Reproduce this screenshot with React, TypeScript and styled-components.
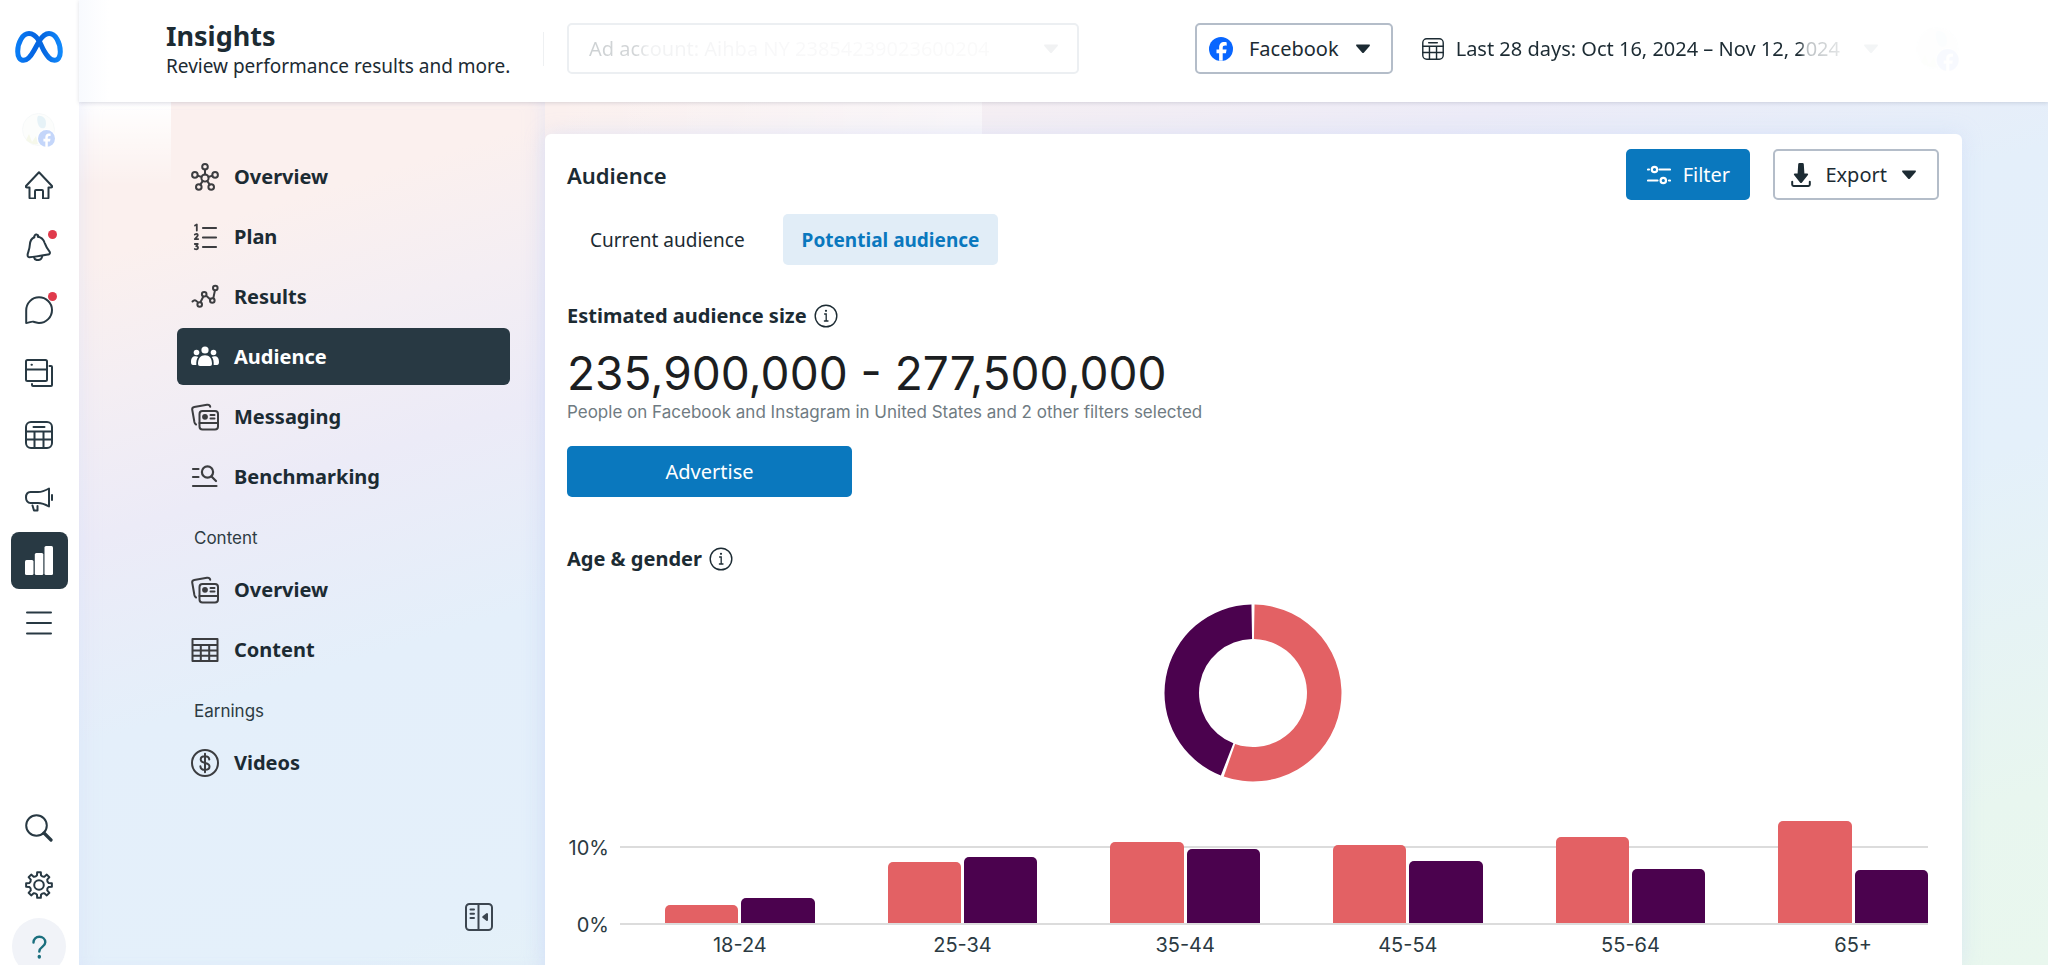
import React from 'react';
import styled, { createGlobalStyle, css } from 'styled-components';

const INK = '#1c2b33';
const SLATE = '#283943';
const BLUE = '#0a78be';
const CORAL = '#e36164';
const PLUM = '#4b024e';

const UI = '"Noto Sans", "Open Sans", sans-serif';
const PLAIN = 'Inter, Roboto, sans-serif';

const GlobalStyle = createGlobalStyle`
  *, *::before, *::after { box-sizing: border-box; }
  html, body { margin: 0; }
  body { font-family: ${UI}; font-size: 20px; line-height: 28px; color: ${INK}; background: #fff; }
  button, select { font: inherit; color: inherit; margin: 0; }
  h1, h2, h3, p, ul { margin: 0; padding: 0; }
  ul { list-style: none; }
  a { color: inherit; text-decoration: none; }
`;

const Page = styled.div`
  display: flex;
  height: 100vh;
  overflow: hidden;
`;

/* ---------- icon rail ---------- */

const Rail = styled.aside`
  flex: 0 0 79px;
  display: flex;
  flex-direction: column;
  align-items: center;
  padding: 31px 1px 0 0;
  background: #fff;
`;

const RailList = styled.nav`
  display: flex;
  flex-direction: column;
  justify-content: space-between;
  height: 496px;
  margin-top: 9px;
`;

const RailFoot = styled.div`
  display: flex;
  flex-direction: column;
  align-items: center;
  margin: auto 0 -10px;
`;

const RailButton = styled.button<{ $active?: boolean }>`
  position: relative;
  display: grid;
  place-items: center;
  width: 57px;
  height: 57px;
  padding: 0;
  border: 0;
  border-radius: 8px;
  color: ${({ $active }) => ($active ? '#fff' : SLATE)};
  background: ${({ $active }) => ($active ? SLATE : 'transparent')};
`;

const HelpButton = styled(RailButton)`
  width: 54px;
  margin-top: 5px;
  border-radius: 50%;
  background: #f1f3f8;
  color: #1b6f7e;
`;

const Dot = styled.span`
  position: absolute;
  top: 11px;
  right: 11px;
  width: 9px;
  height: 9px;
  border-radius: 50%;
  background: #e03a4c;
`;

const PageAvatar = styled.div`
  margin-top: 50px;
  height: 34px;
  opacity: 0.28;
`;

/* ---------- header ---------- */

const Column = styled.div`
  flex: 1;
  min-width: 0;
  display: flex;
  flex-direction: column;
`;

const Header = styled.header`
  position: relative;
  display: flex;
  align-items: center;
  height: 102px;
  padding: 0 88px 5px 87px;
  background: linear-gradient(90deg, #f8fafe 0, #fff 30px);
  box-shadow: 0 1px 4px rgba(40, 50, 80, 0.16);
`;

const Heading = styled.div`
  width: 377px;
  padding-top: 2px;
`;

const Title = styled.h1`
  font-size: 27px;
  line-height: 32px;
  font-weight: 700;
`;

const Subtitle = styled.p`
  font-size: 19px;
  line-height: 28px;
  white-space: nowrap;
`;

const Divider = styled.span`
  width: 1px;
  height: 34px;
  background: #eef0f2;
`;

const Outlined = styled.button`
  display: flex;
  align-items: center;
  height: 51px;
  padding: 0 20px 0 14px;
  border: 2px solid #b4bdc9;
  border-radius: 5px;
  background: #fff;
  white-space: nowrap;
`;

const AccountButton = styled(Outlined)`
  flex: 0 1 512px;
  justify-content: space-between;
  margin-left: 23px;
  padding: 0 18px 0 20px;
  border-color: #eceff2;
  color: #f1f2f3;
`;

const FadedName = styled.span`
  color: transparent;
  background: linear-gradient(90deg, #cdd1d3 0, #d3d6d8 48px, #f1f2f3 60px, #f8f8f9 160px, #fafafa 100%);
  background-clip: text;
`;

const SourceButton = styled(Outlined)`
  gap: 16px;
  margin-left: auto;
  padding-left: 12px;
`;

const DateButton = styled.button`
  display: flex;
  align-items: center;
  gap: 12px;
  margin-left: 29px;
  padding: 0;
  border: 0;
  background: none;
  white-space: nowrap;

  > svg:last-child { color: #f3f5f6; margin-left: 11px; }
`;

const DateText = styled.span`
  color: transparent;
  background: linear-gradient(90deg, ${INK} 0, ${INK} calc(100% - 40px), #b9bec1 calc(100% - 34px), #e3e5e6 100%);
  background-clip: text;
`;

const ProfileGhost = styled.div`
  margin-left: 37px;
  height: 44px;
  opacity: 0.03;
`;

/* ---------- body ---------- */

const Body = styled.div`
  flex: 1;
  min-height: 0;
  display: flex;
  padding-right: 86px;
  background:
    linear-gradient(rgba(255, 255, 255, 0.9) 10%, rgba(255, 255, 255, 0)) 0 0 / 92px 84px no-repeat,
    linear-gradient(90deg, rgba(255, 255, 255, 0), rgba(255, 255, 255, 0.5)) 461px 0 / 442px 32px no-repeat,
    linear-gradient(163deg, #fbf0ee 0, #fbf0ee 11%, #f4eef3 20%, #ecebf7 30%, #e4effa 44%, #e4f0fa 64%, #e8f6ef 88%, #e9f7ee 100%);
`;

const SideNav = styled.nav`
  flex: 0 0 466px;
  display: flex;
  flex-direction: column;
  padding: 46px 35px 34px 98px;
  box-shadow: inset 16px 0 20px -14px rgba(205, 215, 250, 0.35), inset -16px 0 20px -14px rgba(205, 215, 250, 0.35);
`;

const NavList = styled.ul`
  display: flex;
  flex-direction: column;
  gap: 3px;
`;

const NavLink = styled.a<{ $active?: boolean }>`
  display: flex;
  align-items: center;
  gap: 15px;
  height: 57px;
  padding: 0 14px;
  border-radius: 6px;
  font-size: 20px;
  font-weight: 700;
  color: ${({ $active }) => ($active ? '#fff' : INK)};
  ${({ $active }) => $active && css`background: ${SLATE};`}

  svg { color: ${({ $active }) => ($active ? '#fff' : '#3c3d40')}; }
`;

const NavLabel = styled.h2`
  margin: 20px 0 9px 17px;
  font: 400 17px/27px ${PLAIN};
  color: #2d3b43;
`;

const CollapseButton = styled.button`
  align-self: flex-end;
  display: flex;
  margin: auto 17px 0 0;
  padding: 0;
  border: 0;
  background: none;
  color: #3c4650;
`;

const Card = styled.main`
  flex: 1;
  min-width: 0;
  margin-top: 32px;
  padding: 15px 23px 0 22px;
  background: #fff;
  border-radius: 6px 6px 0 0;
  box-shadow: 0 0 20px rgba(190, 205, 250, 0.35);
`;

const CardHead = styled.div`
  display: flex;
  align-items: center;
  gap: 23px;
`;

const CardTitle = styled.h2`
  margin-right: auto;
  font-size: 22px;
  line-height: 28px;
  font-weight: 600;
`;

const PrimaryButton = styled.button<{ $wide?: boolean }>`
  display: flex;
  align-items: center;
  justify-content: center;
  gap: 12px;
  width: ${({ $wide }) => ($wide ? '285px' : '124px')};
  height: 51px;
  padding: 0;
  border: 0;
  border-radius: 5px;
  background: ${BLUE};
  color: #fff;
`;

const ExportButton = styled(Outlined)`
  gap: 14px;
  padding-left: 16px;
`;

const Tabs = styled.div`
  display: flex;
  gap: 19px;
  margin-top: 14px;
  padding-left: 4px;
`;

const Tab = styled.button<{ $active?: boolean }>`
  height: 51px;
  padding: 0 19px;
  border: 0;
  border-radius: 5px;
  font-size: 19px;
  font-weight: ${({ $active }) => ($active ? 700 : 400)};
  color: ${({ $active }) => ($active ? BLUE : INK)};
  background: ${({ $active }) => ($active ? '#e1edf7' : 'transparent')};
`;

const SectionTitle = styled.h3`
  display: flex;
  align-items: center;
  gap: 7px;
  font-size: 20px;
  line-height: 28px;
  font-weight: 700;
`;

const Estimate = styled.section`
  padding-top: 37px;
`;

const Range = styled.p`
  margin-top: 15px;
  font: 400 46px/56px ${PLAIN};
  color: #1c1e21;
  white-space: nowrap;
`;

const Note = styled.p`
  margin: 0 0 22px;
  font: 400 17px/23px ${PLAIN};
  color: #6f7b82;
`;

const Demographics = styled.section`
  padding-top: 48px;
`;

const Donut = styled.svg`
  display: block;
  width: 178px;
  height: 178px;
  margin: 31px auto 0;
`;

/* ---------- bar chart ---------- */

const Chart = styled.div`
  display: grid;
  grid-template-columns: 42px 1fr;
  column-gap: 11px;
  margin: 39px 11px 0 0;
  font: 400 20px/24px ${PLAIN};
  color: #2b3a42;
`;

const Axis = styled.div`
  display: flex;
  flex-direction: column;
  justify-content: space-between;
  align-items: flex-end;
  height: 101px;
  margin: 15px 0 -12px;
`;

const Plot = styled.div`
  height: 104px;
  border-bottom: 2px solid #dcdcdc;
  background: linear-gradient(#dcdcdc, #dcdcdc) 0 25px / 100% 2px no-repeat;
`;

const Groups = styled.div`
  display: grid;
  grid-template-columns: repeat(6, 1fr);
  column-gap: 73px;
  height: 100%;
  padding-left: 45px;
`;

const Group = styled.div`
  display: flex;
  align-items: flex-end;
  gap: 3px;
`;

const Bar = styled.div<{ $tone: string; $share: number }>`
  flex: 1;
  height: ${({ $share }) => $share}%;
  border-radius: 5px 5px 0 0;
  background: ${({ $tone }) => $tone};
`;

const AgeLabels = styled(Groups)`
  grid-column: 2;
  height: auto;
  padding-top: 8px;
  text-align: center;
`;

/* ---------- icons ---------- */

type IconProps = { size?: number; box?: number; sw?: number; children: React.ReactNode };

const Icon = ({ size = 28, box = 28, sw = 2, children }: IconProps) => (
  <svg width={size} height={size} viewBox={`0 0 ${box} ${box}`} fill="none" stroke="currentColor"
    strokeWidth={sw} strokeLinecap="round" strokeLinejoin="round" aria-hidden="true">{children}</svg>
);

const Caret = () => (
  <svg width="16" height="10" viewBox="0 0 16 10" fill="currentColor" aria-hidden="true">
    <path d="M2 0.5h12q1.6 0 .7 1.4L9 8.6q-1 1-2 0L1.3 1.9Q.4.5 2 .5z" />
  </svg>
);

const MetaLogo = () => (
  <svg width="48" height="32" viewBox="0 0 48 32" fill="none" aria-label="Meta">
    <defs>
      <linearGradient id="metaA" x1="0" y1="0" x2="1" y2="0">
        <stop offset="0" stopColor="#0a7cf5" />
        <stop offset="0.35" stopColor="#0566e4" />
        <stop offset="0.6" stopColor="#0668e1" />
        <stop offset="1" stopColor="#1088fb" />
      </linearGradient>
    </defs>
    <path d="M24 9.5C20.500 4.500 17.500 2.600 14 2.600 7.500 2.600 2.700 11.500 2.700 20.500c0 5.500 2.300 8.800 6 8.800 4 0 6.700-3.300 10.300-9.800L24 10.500C27.500 4.800 30.500 2.600 34 2.600c6.500 0 11.300 8.900 11.300 18.200 0 5.400-2.300 8.500-5.900 8.500-4 0-6.600-2.900-10.900-10.300z"
      stroke="url(#metaA)" strokeWidth="5" strokeLinejoin="round" />
  </svg>
);

const FacebookMark = ({ size = 24 }: { size?: number }) => (
  <svg width={size} height={size} viewBox="0 0 24 24" aria-hidden="true">
    <circle cx="12" cy="12" r="12" fill="#0866ff" />
    <path d="M10.100 23.800v-7.600H7.500v-3.700h2.600v-1.700c0-3.900 1.800-5.700 5.300-5.700.9 0 1.800.1 2.300.3v3.300c-.4 0-1-.1-1.500-.1-1.800 0-2.500.7-2.500 2.400v1.500h3.900l-.7 3.700h-3.200v7.600z" fill="#fff" />
  </svg>
);

const GhostAvatar = ({ size = 34 }: { size?: number }) => (
  <svg width={size} height={size} viewBox="0 0 34 34" aria-hidden="true">
    <circle cx="16.500" cy="16.500" r="16" fill="#f7faf6" stroke="#dfe8ea" />
    <path d="M16 3c4-1 8 2 8 7s-2 6-5 5-5-9-3-12z" fill="#a9d3e6" />
    <path d="M4 27l3-6 3 8 4-6 2 8q-7 1-12-4z" fill="#dfe9b8" />
    <g transform="translate(16 17)">
      <circle cx="8.500" cy="8.500" r="9.500" fill="#fff" />
      <circle cx="8.500" cy="8.500" r="8.500" fill="#2f6ff0" />
      <path d="M7.300 17v-5.600H5.400V8.800h1.900V7.600c0-2.800 1.300-4 3.700-4h1.600v2.300h-1c-1.300 0-1.800.5-1.800 1.700v1.200h2.700l-.5 2.600H9.800V17z" fill="#fff" />
    </g>
  </svg>
);

const HomeIcon = () => (
  <Icon><path d="M1 15 14 1.200 27 15q.4 1.500-1 1.500h-2.500V26.500q0 1-1 1H18V20q0-1-1-1h-6q-1 0-1 1v7.500H5.500q-1 0-1-1V16.500H2Q.6 16.500 1 15z" /></Icon>
);
const BellIcon = () => (
  <Icon><path d="M9.300 4.200C6 5.500 5 8.500 4.800 12c-.2 4-1.600 6.500-2.100 9-.3 1.800.2 3.300 1.600 3.200C11 23.800 18 22.500 23.500 21.500c1.600-.3 1.800-1.900.9-3.100-3-3.500-3.600-5.400-4.700-8.400C18.500 6.300 15.500 4 12.800 3.700" /><path d="M9.200 4.200Q9.600 1.200 11.500 1.600t2.200 2.200M9 24.300c.7 3.800 7.500 4 8.200-1.200" /></Icon>
);
const ChatIcon = () => (
  <Icon><path d="M1.200 27V14.500C1.200 7 7 1.300 14 1.300S27 7 27 14s-5.800 13-13 13c-2 0-3.500-.8-5.500-1.300S3 27 1.200 27z" /></Icon>
);
const PagesIcon = () => (
  <Icon><rect x="1" y="1" width="21" height="21" rx="1.500" /><path d="M1 10.500h21M6.500 5.800h.4M24.500 7H26q1 0 1 1v18q0 1-1 1H8q-1 0-1-1v-1" /></Icon>
);
const GridIcon = ({ size = 28, sw = 2 }: { size?: number; sw?: number }) => (
  <Icon size={size} sw={sw}><rect x="1" y="1" width="26" height="26" rx="5" /><path d="M1 10.500h26M1 18.500h26M9.500 10.500V27M18.500 10.500V27M8.500 6h11" /></Icon>
);
const MegaphoneIcon = () => (
  <Icon><path d="M5.500 8H13c4.500 0 7.500-1.500 11-3.500V22.500C20.500 20.500 17.500 19 13 19H5.500C2.700 19 1 16.700 1 13.500S2.700 8 5.500 8zM27 11v5M7.500 21.500l1.500 5h3.500V22" /></Icon>
);
const BarsIcon = () => (
  <svg width="30" height="30" viewBox="0 0 30 30" fill="currentColor" aria-hidden="true">
    <rect x="1" y="14" width="8.500" height="15" rx="1.500" /><rect x="10.800" y="7" width="8.500" height="22" rx="1.500" /><rect x="20.500" y="0" width="8.500" height="29" rx="1.500" />
  </svg>
);
const MenuIcon = () => <Icon><path d="M2 3.500h24M2 14h24M2 24.500h24" /></Icon>;
const SearchIcon = () => (
  <Icon><circle cx="11.500" cy="11.500" r="10.300" /><path d="M19 19l7 7" strokeWidth="3.200" /></Icon>
);
const teeth = Array.from({ length: 8 }, (_, i) => i * 45);
const gearPath = teeth.map((a, i) => {
  const pt = (deg: number, r: number) => {
    const t = ((deg - 90) * Math.PI) / 180;
    return `${(14 + r * Math.cos(t)).toFixed(2)} ${(14 + r * Math.sin(t)).toFixed(2)}`;
  };
  return `${i ? 'L' : 'M'}${pt(a - 8, 13)}L${pt(a + 8, 13)}L${pt(a + 12, 9.8)}Q${pt(a + 22.5, 8.6)} ${pt(a + 33, 9.8)}`;
}).join('') + 'z';
const GearIcon = () => <Icon><path d={gearPath} /><circle cx="14" cy="14" r="4.800" /></Icon>;
const HelpIcon = () => (
  <Icon sw={2.4}><path d="M8.500 9.500C8.500 5.800 11 3.800 14.300 3.800s6 2.200 6 5.500c0 4.700-6 4.500-6 9.200" /><path d="M14.300 23.500v.5" strokeWidth="3.400" /></Icon>
);

const HubIcon = () => {
  const nodes = [[14, 3.800], [3.900, 11.900], [24.100, 11.900], [7.800, 24], [20.200, 24]];
  return (
    <Icon sw={2}>
      <circle cx="14" cy="15" r="3.600" />
      {nodes.map(([x, y]) => <circle key={`${x}-${y}`} cx={x} cy={y} r="2.800" />)}
      <path d="M14 6.600v4.800M6.700 12.700l3.800 1.200M21.300 12.700l-3.800 1.200M9.300 21.600l2.500-3.700M18.700 21.600l-2.500-3.700" />
    </Icon>
  );
};
const PlanIcon = () => (
  <Icon sw={2.2}>
    <path d="M12 5h13M12 14.500h13M12 24h13" />
    <path d="M4 2.500l1.800-1v6M3.800 11.500q2.800-1.400 3 .6 0 1.200-3 4h3.400M3.800 21h3l-1.600 2.200q2 .2 1.800 1.800-.6 1.900-3.200 1" strokeWidth="1.800" />
  </Icon>
);
const ResultsIcon = () => (
  <Icon sw={2}>
    <path d="M1.500 18.500q2.500-2.800 5 .5M9.800 18.500l2.400-4.800M15.800 13.300l3.600 3.200M22.300 15.200l1.600-7.600" />
    <circle cx="8.700" cy="21.500" r="2.300" /><circle cx="13.200" cy="11.300" r="2.300" /><circle cx="21.300" cy="17.500" r="2.300" /><circle cx="24.300" cy="5" r="2.300" />
  </Icon>
);
const PeopleIcon = () => (
  <svg width="28" height="28" viewBox="0 0 28 28" fill="currentColor" aria-hidden="true">
    <circle cx="14" cy="7" r="3.600" /><circle cx="5.500" cy="9.500" r="2.800" /><circle cx="22.500" cy="9.500" r="2.800" />
    <path d="M7 21c0-6 2.500-8.800 7-8.800s7 2.800 7 8.800q0 2-2 2H9q-2 0-2-2zM0 19c0-4 1.500-5.800 4.500-5.800 1 0 2 .3 2.700.9C5.600 16 5.200 18.500 5.300 22H2q-2 0-2-3zM28 19c0-4-1.500-5.800-4.500-5.800-1 0-2 .3-2.700.9 1.600 1.900 2 4.400 1.900 7.900H26q2 0 2-3z" />
  </svg>
);
const CardsIcon = () => (
  <Icon sw={2}>
    <rect x="8.500" y="8" width="18.500" height="18.500" rx="3" /><path d="M8.500 20H27M19.500 12h4M19.500 15.500h4" />
    <circle cx="14" cy="13.800" r="1.900" fill="currentColor" />
    <path d="M5 21.500Q3.800 21 3.400 19L1.200 6.500Q1 4.300 3.200 3.900L16 1.800q2.700-.4 3.200 2" />
  </Icon>
);
const BenchmarkIcon = () => (
  <Icon sw={2.2}><path d="M2 6h5.500M2 14h5.500M2 23h23.500M20.500 13.500l4.500 4.500" /><circle cx="16.500" cy="9" r="5.600" /></Icon>
);
const TableIcon = () => (
  <Icon sw={2}><path d="M1.500 3h25v22h-25zM1.500 9h25M1.500 14.500h25M1.500 19.800h25M9.800 9v16M18.200 9v16" /></Icon>
);
const DollarIcon = () => (
  <Icon sw={2}><circle cx="14" cy="14" r="13" /><path d="M18.300 10.500c-.3-2.200-2-3.200-4.300-3.200-2.500 0-4.300 1.100-4.300 3.200 0 4.700 8.800 2.200 8.800 7 0 2.100-1.900 3.300-4.500 3.300-2.700 0-4.400-1.300-4.600-3.500M14 4.800v18.400" /></Icon>
);
const CollapseIcon = () => (
  <Icon sw={2}><rect x="1" y="1" width="26" height="26" rx="3.500" /><path d="M13.500 1v26M5.500 6.500h3.500M5.500 10.800h3.500M5.500 15h3.500" /><path d="M22 11v6l-3.800-3z" fill="currentColor" /></Icon>
);
const FilterIcon = () => (
  <Icon size={24} box={24} sw={2.200}><path d="M1 6.500h1M12.500 6.500H23M1 17.500h9.500M22 17.500h1" /><circle cx="7.500" cy="6.500" r="2.700" /><circle cx="16.300" cy="17.500" r="2.700" /></Icon>
);
const DownloadIcon = () => (
  <svg width="20" height="24" viewBox="0 0 20 24" fill="none" aria-hidden="true">
    <path d="M7.200 1.200Q7.300 0 8.500 0h3q1.200 0 1.300 1.200l.6 9.300h2.800q1.700.2.700 1.600l-5.900 7.500q-1 1-2 0l-5.900-7.500q-1-1.400.7-1.600h2.800z" fill="currentColor" />
    <path d="M1.200 18.800v2.800q0 1.300 1.300 1.300h15q1.300 0 1.300-1.300v-2.800" stroke="currentColor" strokeWidth="2" strokeLinecap="round" />
  </svg>
);
const InfoIcon = () => (
  <svg width="24" height="24" viewBox="0 0 24 24" fill="none" stroke="currentColor" strokeLinecap="round" aria-hidden="true">
    <circle cx="12" cy="12" r="10.800" strokeWidth="1.400" />
    <path d="M10.600 10H12.200v7M10.400 17h3.600" strokeWidth="1.300" /><circle cx="12" cy="6.800" r="1.100" fill="currentColor" stroke="none" />
  </svg>
);

/* ---------- data ---------- */

const railItems = [
  { label: 'Home', icon: <HomeIcon /> },
  { label: 'Notifications', icon: <BellIcon />, dot: true },
  { label: 'Inbox', icon: <ChatIcon />, dot: true },
  { label: 'Content', icon: <PagesIcon /> },
  { label: 'Planner', icon: <GridIcon /> },
  { label: 'Ads', icon: <MegaphoneIcon /> },
  { label: 'Insights', icon: <BarsIcon />, active: true },
  { label: 'All tools', icon: <MenuIcon /> },
];

const navGroups = [
  {
    items: [
      { label: 'Overview', icon: <HubIcon /> },
      { label: 'Plan', icon: <PlanIcon /> },
      { label: 'Results', icon: <ResultsIcon /> },
      { label: 'Audience', icon: <PeopleIcon />, active: true },
      { label: 'Messaging', icon: <CardsIcon /> },
      { label: 'Benchmarking', icon: <BenchmarkIcon /> },
    ],
  },
  { title: 'Content', items: [{ label: 'Overview', icon: <CardsIcon /> }, { label: 'Content', icon: <TableIcon /> }] },
  { title: 'Earnings', items: [{ label: 'Videos', icon: <DollarIcon /> }] },
] as { title?: string; items: { label: string; icon: React.ReactNode; active?: boolean }[] }[];

const AXIS_MAX = 13.3;
const ages = [
  { range: '18-24', women: 2.4, men: 3.3 },
  { range: '25-34', women: 7.9, men: 8.6 },
  { range: '35-44', women: 10.6, men: 9.7 },
  { range: '45-54', women: 10.2, men: 8.1 },
  { range: '55-64', women: 11.2, men: 7.1 },
  { range: '65+', women: 13.3, men: 6.9 },
];

const arc = (from: number, to: number, cx = 89, cy = 89, R = 88.5, r = 54) => {
  const p = (deg: number, rad: number) => {
    const t = ((deg - 90) * Math.PI) / 180;
    return `${(cx + rad * Math.cos(t)).toFixed(2)} ${(cy + rad * Math.sin(t)).toFixed(2)}`;
  };
  const big = to - from > 180 ? 1 : 0;
  return `M${p(from, R)}A${R} ${R} 0 ${big} 1 ${p(to, R)}L${p(to, r)}A${r} ${r} 0 ${big} 0 ${p(from, r)}z`;
};

export default function App() {
  return (
    <Page>
      <GlobalStyle />
      <Rail>
        <MetaLogo />
        <PageAvatar><GhostAvatar /></PageAvatar>
        <RailList aria-label="Business tools">
          {railItems.map(({ label, icon, dot, active }) => (
            <RailButton key={label} aria-label={label} $active={active}>{icon}{dot && <Dot />}</RailButton>
          ))}
        </RailList>
        <RailFoot>
          <RailButton aria-label="Search"><SearchIcon /></RailButton>
          <RailButton aria-label="Settings"><GearIcon /></RailButton>
          <HelpButton aria-label="Help"><HelpIcon /></HelpButton>
        </RailFoot>
      </Rail>

      <Column>
        <Header>
          <Heading>
            <Title>Insights</Title>
            <Subtitle>Review performance results and more.</Subtitle>
          </Heading>
          <Divider />
          <AccountButton>
            <FadedName>Ad account: Aihba NY 23854239023600204</FadedName>
            <Caret />
          </AccountButton>
          <SourceButton><FacebookMark />Facebook<Caret /></SourceButton>
          <DateButton>
            <GridIcon size={22} sw={1.8} />
            <DateText>Last 28 days: Oct 16, 2024 – Nov 12, 2024</DateText>
            <Caret />
          </DateButton>
          <ProfileGhost><GhostAvatar size={44} /></ProfileGhost>
        </Header>

        <Body>
          <SideNav aria-label="Insights">
            {navGroups.map(({ title, items }) => (
              <React.Fragment key={title ?? 'main'}>
                {title && <NavLabel>{title}</NavLabel>}
                <NavList>
                  {items.map(({ label, icon, active }) => (
                    <li key={label}><NavLink href="#" $active={active}>{icon}{label}</NavLink></li>
                  ))}
                </NavList>
              </React.Fragment>
            ))}
            <CollapseButton aria-label="Collapse menu"><CollapseIcon /></CollapseButton>
          </SideNav>

          <Card>
            <CardHead>
              <CardTitle>Audience</CardTitle>
              <PrimaryButton><FilterIcon />Filter</PrimaryButton>
              <ExportButton><DownloadIcon />Export<Caret /></ExportButton>
            </CardHead>
            <Tabs role="tablist">
              <Tab role="tab" aria-selected={false}>Current audience</Tab>
              <Tab role="tab" aria-selected $active>Potential audience</Tab>
            </Tabs>

            <Estimate>
              <SectionTitle>Estimated audience size <InfoIcon /></SectionTitle>
              <Range>235,900,000 - 277,500,000</Range>
              <Note>People on Facebook and Instagram in United States and 2 other filters selected</Note>
              <PrimaryButton $wide>Advertise</PrimaryButton>
            </Estimate>

            <Demographics>
              <SectionTitle>Age &amp; gender <InfoIcon /></SectionTitle>
              <Donut viewBox="0 0 178 178" role="img" aria-label="Share by gender">
                <path d={arc(1, 199.3)} fill={CORAL} />
                <path d={arc(201.3, 359)} fill={PLUM} />
              </Donut>
              <Chart>
                <Axis><span>10%</span><span>0%</span></Axis>
                <Plot>
                  <Groups>
                    {ages.map(({ range, women, men }) => (
                      <Group key={range}>
                        <Bar $tone={CORAL} $share={(women / AXIS_MAX) * 100} />
                        <Bar $tone={PLUM} $share={(men / AXIS_MAX) * 100} />
                      </Group>
                    ))}
                  </Groups>
                </Plot>
                <AgeLabels>{ages.map(({ range }) => <span key={range}>{range}</span>)}</AgeLabels>
              </Chart>
            </Demographics>
          </Card>
        </Body>
      </Column>
    </Page>
  );
}
